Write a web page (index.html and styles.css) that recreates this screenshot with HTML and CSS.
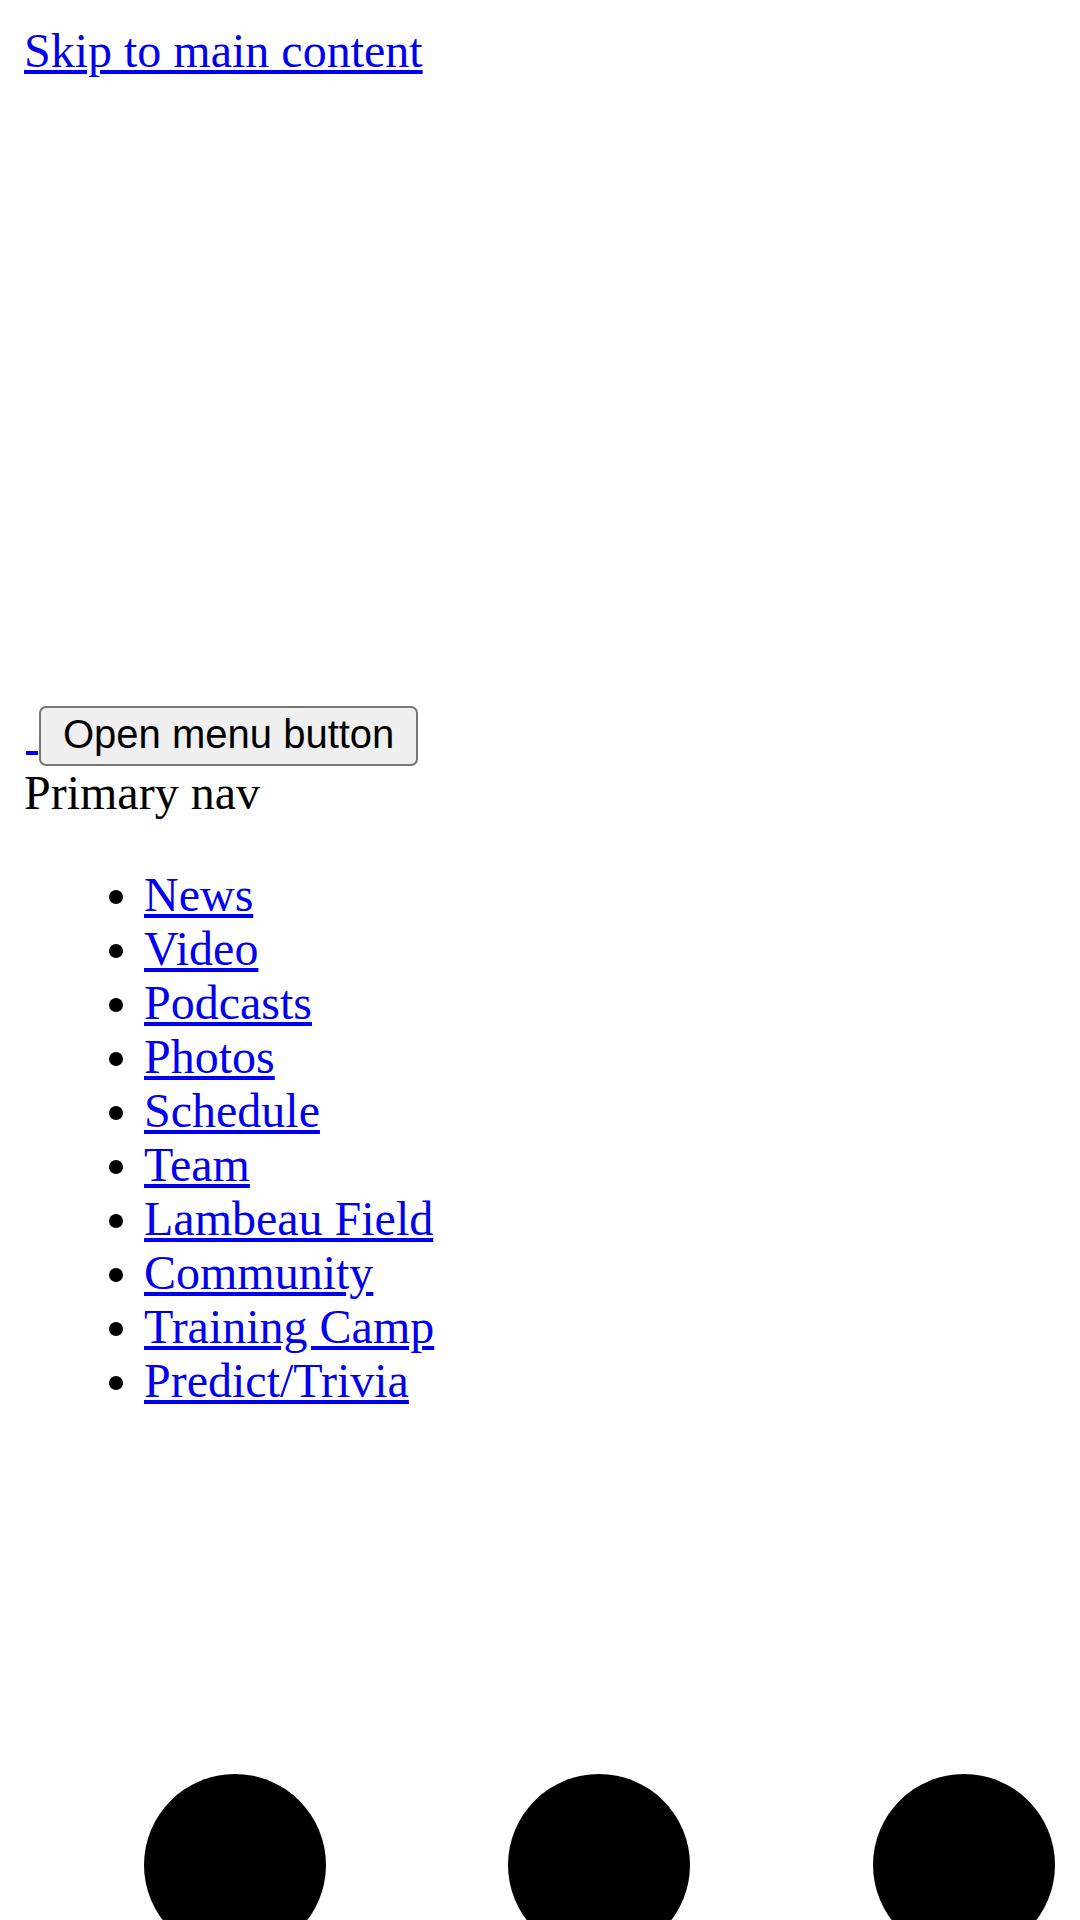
FILE: index.html
```html
<!DOCTYPE html>
<html lang="en">
<head>
    <meta charset="UTF-8">
    <meta name="viewport" content="width=device-width, initial-scale=1.0">
    <title>Packers</title>
    <link rel="stylesheet" href="styles.css">
</head>
<body>
<a href="#main" class="skip">Skip to main content</a>

<header class="site-header">
    <div class="logo-slot"></div>
    <div class="menu-line">
        <a href="#" class="logo-link">&nbsp;</a><button type="button" class="menu-btn">Open menu button</button>
    </div>
    <div class="nav-label">Primary nav</div>
    <ul class="primary-nav">
        <li><a href="#">News</a></li>
        <li><a href="#">Video</a></li>
        <li><a href="#">Podcasts</a></li>
        <li><a href="#">Photos</a></li>
        <li><a href="#">Schedule</a></li>
        <li><a href="#">Team</a></li>
        <li><a href="#">Lambeau Field</a></li>
        <li><a href="#">Community</a></li>
        <li><a href="#">Training Camp</a></li>
        <li><a href="#">Predict/Trivia</a></li>
    </ul>
</header>

<div class="more-dots">
    <svg width="911" height="182" viewBox="0 0 911 182">
        <circle cx="91" cy="91" r="91" fill="#000"></circle>
        <circle cx="455" cy="91" r="91" fill="#000"></circle>
        <circle cx="820" cy="91" r="91" fill="#000"></circle>
    </svg>
</div>
</body>
</html>
```

FILE: styles.css
```css
body {
    margin: 24px 24px;
    font-family: "Liberation Serif", "Times New Roman", serif;
    font-size: 48px;
    line-height: 54px;
    color: #000;
    background: #fff;
}
a {
    color: #0000ee;
}
.skip {
    display: inline-block;
}
.logo-slot {
    height: 627px;
}
.logo-link {
    padding-left: 2px;
}
.menu-btn {
    font-family: "Liberation Sans", Arial, sans-serif;
    font-size: 40px;
    line-height: normal;
    color: #000;
    background-color: #efefef;
    border: 2px solid #767676;
    border-radius: 7px;
    padding: 4px 22px 7px;
    margin: 0 0 0 1px;
}
.primary-nav {
    margin: 48px 0;
    padding-left: 120px;
}
.more-dots {
    margin-top: 366px;
    padding-left: 120px;
    height: 182px;
}
.more-dots svg {
    display: block;
}
```
